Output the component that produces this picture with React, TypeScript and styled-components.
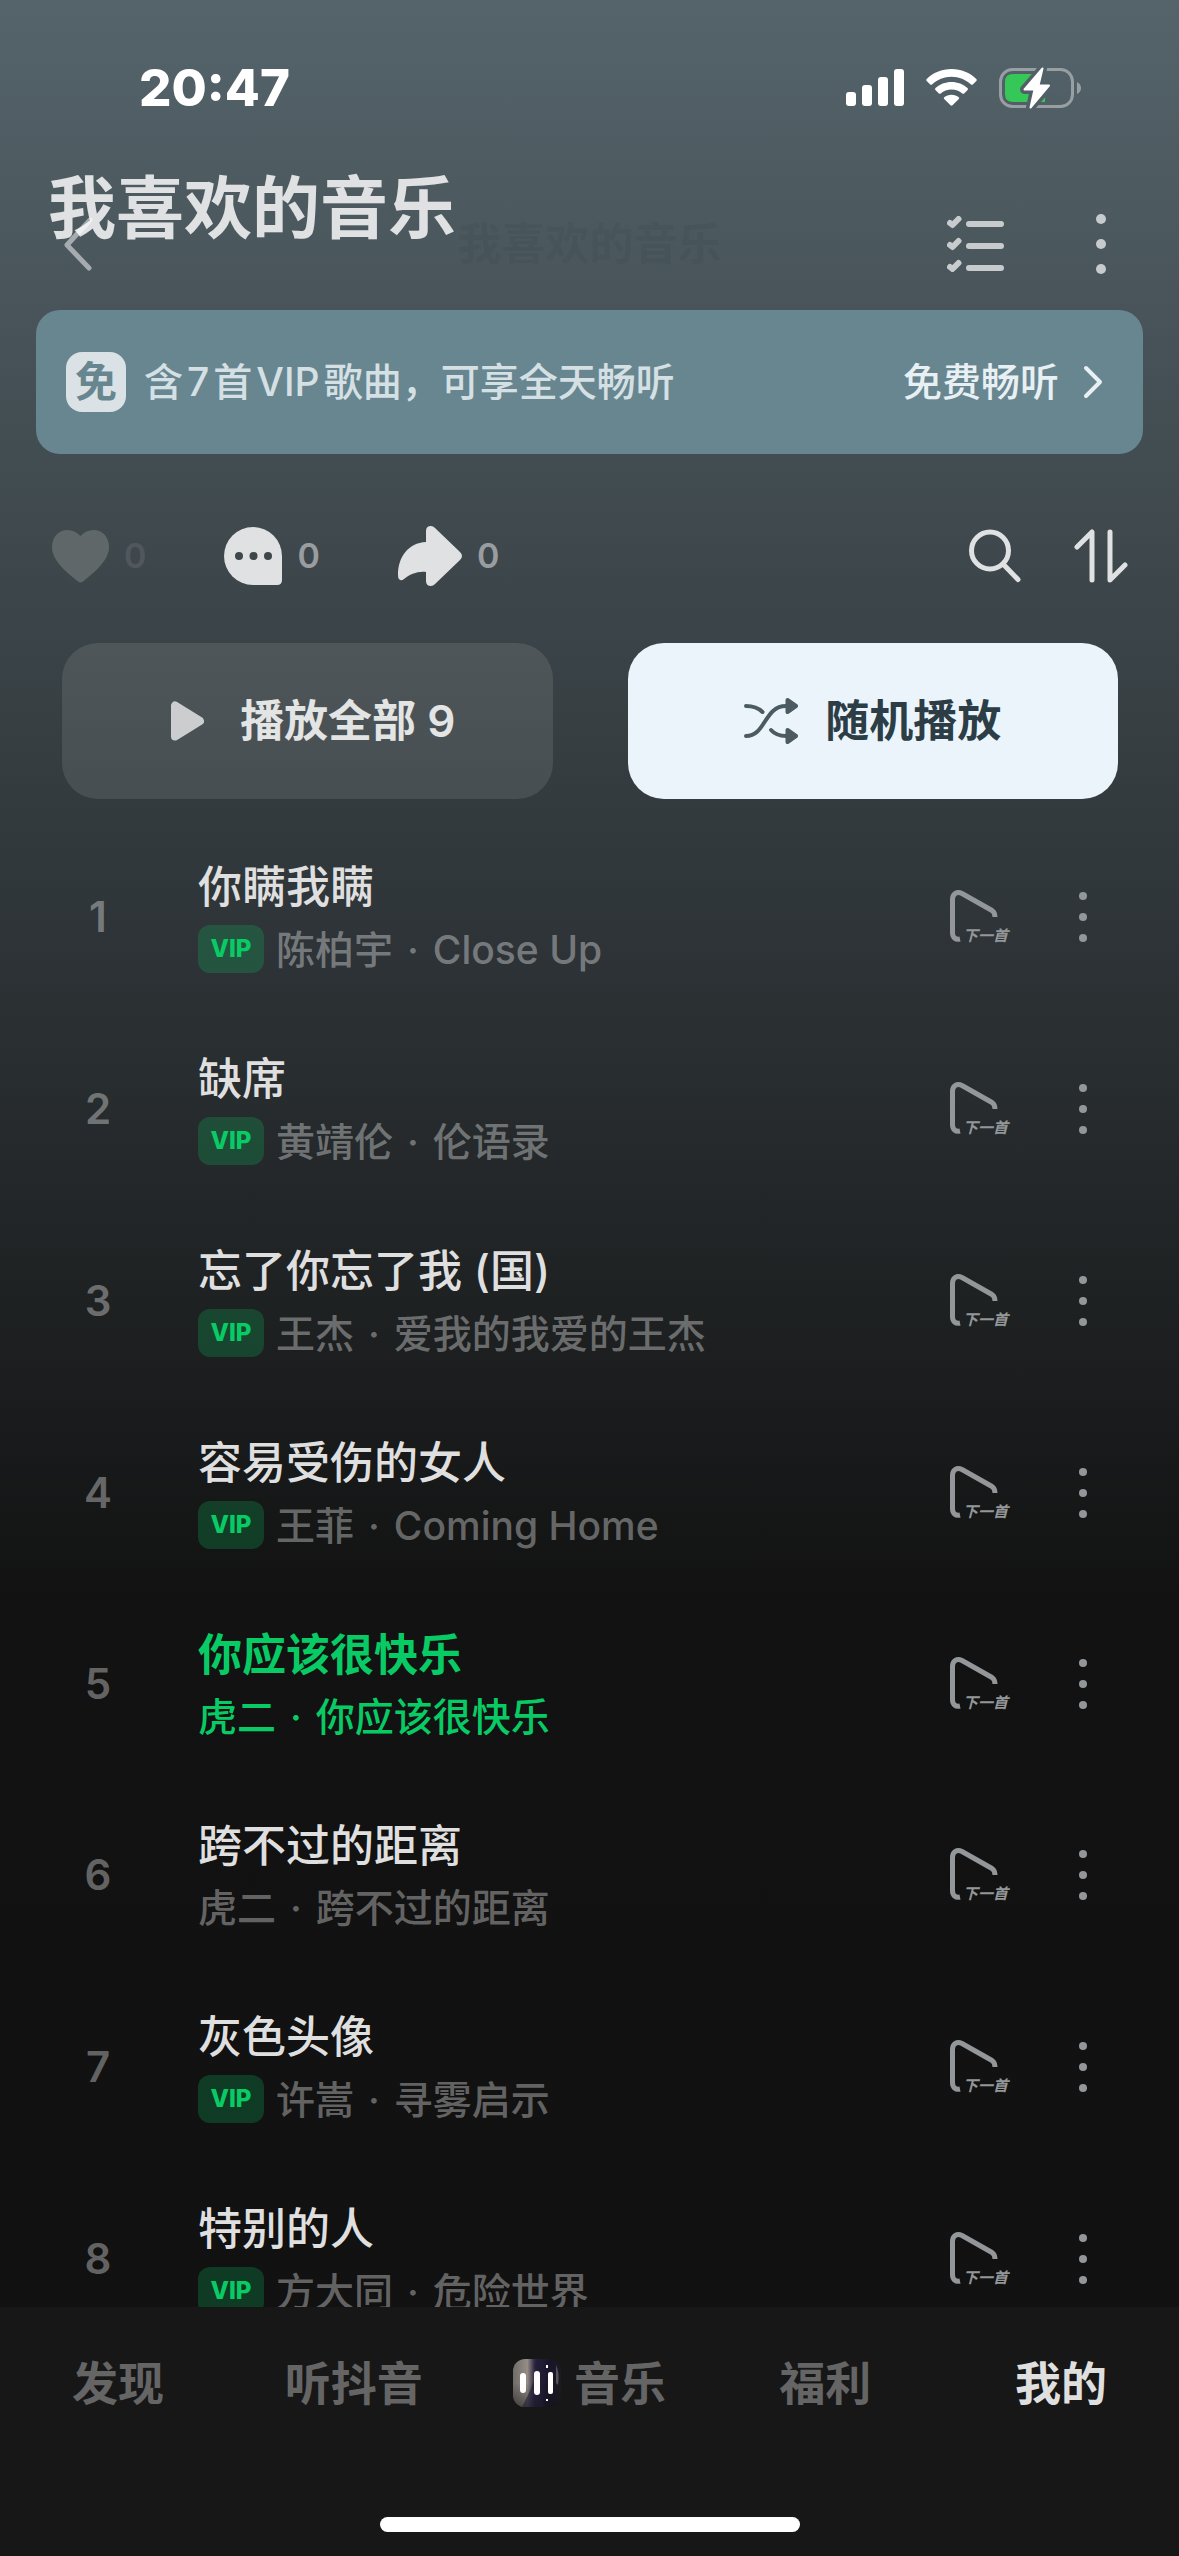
import React from "react";
import styled, { createGlobalStyle } from "styled-components";

const GlobalStyle = createGlobalStyle`
  *, *::before, *::after { box-sizing: border-box; }
  html, body { margin: 0; padding: 0; background: #111111; }
  body {
    font-family: Inter, "Noto Sans CJK SC", sans-serif;
    color: #e0e1e2;
  }
  button {
    margin: 0;
    padding: 0;
    border: 0;
    background: none;
    font: inherit;
    color: inherit;
    cursor: pointer;
  }
  svg { display: block; }
`;

const Screen = styled.div`
  display: flex;
  flex-direction: column;
  height: 100vh;
  overflow: hidden;
  background: linear-gradient(180deg, #55646b 0, #121212 1600px, #111111 100%);
`;

const StatusBar = styled.div`
  display: flex;
  flex: none;
  align-items: center;
  justify-content: space-between;
  height: 156px;
  padding: 20px 98px 0 139px;
  color: #ffffff;
`;

const Clock = styled.time`
  font-size: 51px;
  line-height: 60px;
  font-weight: 800;
`;

const StatusIcons = styled.div`
  display: flex;
  align-items: center;
  gap: 22px;
`;

const Header = styled.header`
  position: relative;
  flex: none;
  padding: 22px 56px 0;
`;

const Toolbar = styled.div`
  display: grid;
  grid-template-columns: 1fr auto 1fr;
  align-items: center;
  height: 132px;
`;

const BackButton = styled.button`
  justify-self: start;
  padding: 0 6px;
`;

const ToolbarTitle = styled.span`
  font-size: 44px;
  line-height: 56px;
  font-weight: 700;
  color: rgba(40, 52, 56, 0.1);
`;

const ToolbarActions = styled.div`
  display: flex;
  justify-self: end;
  align-items: center;
  gap: 76px;
  padding-right: 2px;
  color: #c8cbcd;
`;

const IconButton = styled.button`
  display: flex;
  align-items: center;
  justify-content: center;
  min-width: 40px;
`;

const PlaylistTitle = styled.h1`
  position: absolute;
  top: 12px;
  left: 48px;
  margin: 0;
  font-size: 68px;
  line-height: 80px;
  font-weight: 700;
  color: #dfe1e3;
`;

const BackGlyph = styled.svg`
  position: relative;
  z-index: 1;
`;

const Banner = styled.section`
  display: flex;
  flex: none;
  align-items: center;
  height: 144px;
  margin: 0 36px;
  padding: 0 36px 0 30px;
  border-radius: 24px;
  background: #688690;
`;

const FreeBadge = styled.span`
  display: flex;
  align-items: center;
  justify-content: center;
  width: 60px;
  height: 60px;
  margin-right: 18px;
  border-radius: 16px;
  background: #dae2e5;
  color: #688690;
  font-size: 42px;
  line-height: 60px;
  font-weight: 700;
`;

const BannerText = styled.span`
  flex: 1;
  font-size: 39px;
  line-height: 48px;
  font-weight: 500;
  color: #d5e0e4;
`;

const Latin = styled.span`
  margin: 0 4px;
`;

const BannerLink = styled.a`
  display: flex;
  align-items: center;
  gap: 24px;
  padding-right: 4px;
  font-size: 39px;
  line-height: 48px;
  font-weight: 500;
  color: #e9f0f4;
  text-decoration: none;
`;

const ActionRow = styled.div`
  display: flex;
  flex: none;
  align-items: center;
  justify-content: space-between;
  padding: 72px 51px 57px 52px;
`;

const ActionGroup = styled.div<{ $gap: number }>`
  display: flex;
  align-items: center;
  gap: ${(p) => p.$gap}px;
  height: 60px;
`;

const CountButton = styled.button<{ $dim?: boolean }>`
  display: flex;
  align-items: center;
  gap: 15px;
  color: ${(p) => (p.$dim ? "#5f6769" : "#e0e1e3")};

  span {
    font-size: 34px;
    line-height: 40px;
    font-weight: 600;
    color: ${(p) => (p.$dim ? "#50575d" : "#999da0")};
  }
`;

const PlayRow = styled.div`
  display: grid;
  flex: none;
  grid-template-columns: 1fr 1fr;
  gap: 75px;
  padding: 0 61px 22px 62px;
`;

const PlayButton = styled.button<{ $light?: boolean }>`
  display: flex;
  align-items: center;
  justify-content: center;
  gap: ${(p) => (p.$light ? 27 : 36)}px;
  height: 156px;
  padding-left: ${(p) => (p.$light ? 0 : 12)}px;
  border-radius: 36px;
  font-size: 44px;
  line-height: 56px;
  font-weight: 600;
  background: ${(p) => (p.$light ? "#ebf4fb" : "rgba(255, 255, 255, 0.1)")};
  color: ${(p) => (p.$light ? "#2c3d46" : "#e3e4e4")};
`;

const SongList = styled.ol`
  flex: 1;
  min-height: 0;
  margin: 0;
  padding: 0;
  overflow: hidden;
  list-style: none;
`;

const SongRow = styled.li`
  display: flex;
  align-items: center;
  padding: 39px 76px 40px 62px;
`;

const SongNumber = styled.span`
  width: 72px;
  margin-right: 64px;
  font-size: 42px;
  line-height: 52px;
  font-weight: 600;
  text-align: center;
  color: rgba(255, 255, 255, 0.36);
`;

const SongInfo = styled.div`
  flex: 1;
  min-width: 0;
`;

const SongTitle = styled.div<{ $active?: boolean }>`
  margin-bottom: 11px;
  font-size: 44px;
  line-height: 54px;
  font-weight: ${(p) => (p.$active ? 700 : 500)};
  color: ${(p) => (p.$active ? "#09cb65" : "#dfdfdf")};
`;

const SongMeta = styled.div<{ $active?: boolean }>`
  display: flex;
  align-items: center;
  gap: 12px;
  font-size: 39px;
  line-height: 47px;
  font-weight: 500;
  color: ${(p) => (p.$active ? "#09cb65" : "rgba(255, 255, 255, 0.36)")};
`;

const Separator = styled.span`
  margin: 0 14px;
`;

const VipTag = styled.span`
  display: flex;
  align-items: center;
  justify-content: center;
  width: 66px;
  height: 48px;
  border-radius: 12px;
  background: rgba(9, 203, 101, 0.22);
  color: #09cb65;
  font-size: 24px;
  line-height: 28px;
  font-weight: 800;
`;

const RowActions = styled.div`
  display: flex;
  align-items: center;
  gap: 50px;
  color: #949799;
`;

const TabBar = styled.nav`
  display: flex;
  flex: none;
  flex-direction: column;
  align-items: center;
  background: #171717;
`;

const Tabs = styled.div`
  display: grid;
  grid-template-columns: repeat(5, 1fr);
  width: 100%;
  padding: 40px 0 98px;
`;

const Tab = styled.button<{ $active?: boolean }>`
  display: flex;
  align-items: center;
  justify-content: center;
  gap: 13px;
  height: 72px;
  font-size: 46px;
  line-height: 60px;
  font-weight: 700;
  color: ${(p) => (p.$active ? "#dfdfdf" : "#656565")};
`;

const HomeIndicator = styled.div`
  width: 420px;
  height: 15px;
  margin-bottom: 24px;
  border-radius: 8px;
  background: #ffffff;
`;

const SignalIcon = () => (
  <svg width="58" height="38" viewBox="0 0 58 38" fill="#fff">
    <rect x="0" y="23" width="10" height="14" rx="3" />
    <rect x="16" y="16" width="10" height="21" rx="3" />
    <rect x="32" y="8" width="10" height="29" rx="3" />
    <rect x="48" y="0" width="10" height="37" rx="3" />
  </svg>
);

const WifiIcon = () => (
  <svg width="51" height="38" viewBox="0 0 51 38" fill="#fff">
    <path d="M25.500 0C35.300 0 44 3.800 50.300 10Q51.200 11 50.300 12L46.800 15.400Q46 16.200 45 15.400C39.800 10.700 33 7.800 25.500 7.800S11.200 10.700 6 15.400Q5 16.200 4.200 15.400L.7 12Q-.2 11 .7 10C7 3.800 15.700 0 25.500 0Z" />
    <path d="M25.500 13C31.700 13 37.300 15.300 41.500 19Q42.500 20 41.600 21L38.100 24.500Q37.200 25.200 36.300 24.500C33.400 22 29.600 20.600 25.500 20.600S17.600 22 14.700 24.500Q13.800 25.200 12.900 24.500L9.400 21Q8.500 20 9.500 19C13.700 15.300 19.300 13 25.500 13Z" />
    <path d="M25.500 25.700C28.300 25.700 30.900 26.600 32.800 28.200Q33.700 29 32.800 30L26.500 36.300Q25.500 37.200 24.500 36.300L18.200 30Q17.300 29 18.200 28.200C20.100 26.600 22.700 25.700 25.500 25.700Z" />
  </svg>
);

const BatteryIcon = () => (
  <svg width="82" height="42" viewBox="0 0 82 42">
    <defs>
      <mask id="bolt-gap" maskUnits="userSpaceOnUse" x="0" y="0" width="82" height="42">
        <rect width="82" height="42" fill="#fff" />
        <path
          d="M43.500 1.500L25.500 22.500H35.500L31.500 40.500L50 18.500H39.500Z"
          fill="#000"
          stroke="#000"
          strokeWidth="9"
          strokeLinejoin="round"
        />
      </mask>
    </defs>
    <g mask="url(#bolt-gap)">
      <rect x="1.500" y="2.500" width="72" height="37" rx="12" fill="none" stroke="#989fa3" strokeWidth="3" />
      <path d="M14 7H44Q46 14 46 20V35H14Q6 35 6 27V15Q6 7 14 7Z" fill="#36c759" />
    </g>
    <path d="M78 15Q82 17 82 21T78 27Z" fill="#989fa3" />
    <path
      d="M43.500 1.500L25.500 22.500H35.500L31.500 40.500L50 18.500H39.500Z"
      fill="#fff"
      stroke="#fff"
      strokeWidth="2"
      strokeLinejoin="round"
    />
  </svg>
);

const ChecklistIcon = () => (
  <svg width="58" height="56" viewBox="0 0 58 56" fill="none" stroke="currentColor" strokeLinecap="round" strokeLinejoin="round">
    {[0, 22, 44].map((y) => (
      <g key={y}>
        <path d={`M3 ${y + 7}L5.500 ${y + 9}L11.500 ${y + 3}`} strokeWidth="6" />
        <path d={`M22 ${y + 8}H54`} strokeWidth="6" />
      </g>
    ))}
  </svg>
);

const DotsIcon = ({ radius, step }: { radius: number; step: number }) => (
  <svg width={radius * 2} height={(radius + step) * 2} fill="currentColor">
    {[0, 1, 2].map((i) => (
      <circle key={i} cx={radius} cy={radius + step * i} r={radius} />
    ))}
  </svg>
);

const HeartIcon = () => (
  <svg width="57" height="53" viewBox="0 0 57 53" fill="currentColor">
    <path d="M28.500 6C25 2.200 20.500 0 15.500 0C6.500 0 0 7 0 17C0 30 13 41 26 51.500Q28.500 53.300 31 51.500C44 41 57 30 57 17C57 7 50.500 0 41.500 0C36.500 0 32 2.200 28.500 6Z" />
  </svg>
);

const CommentIcon = () => (
  <svg width="58" height="58" viewBox="0 0 58 58" fill="currentColor">
    <path d="M29 0A29 29 0 0 0 29 58H53Q58 58 58 53V29A29 29 0 0 0 29 0Z" />
    <g fill="#3f474b">
      <circle cx="15" cy="29" r="4" />
      <circle cx="29.500" cy="29" r="4" />
      <circle cx="44" cy="29" r="4" />
    </g>
  </svg>
);

const ShareIcon = () => (
  <svg width="64" height="60" viewBox="0 0 64 60" fill="currentColor">
    <path d="M28 5Q28 0 33 0Q35 0 37 2L62 26Q66 30 62 34L37 58Q35 60 33 60Q28 60 28 55V46C20 45 12 48 6 53Q3 55.500 1 53Q0 52 0 49C0 31 10 17 28 16Z" />
  </svg>
);

const SearchIcon = () => (
  <svg width="52" height="54" viewBox="0 0 52 54" fill="none" stroke="currentColor" strokeWidth="5" strokeLinecap="round">
    <circle cx="21" cy="21.500" r="18.500" />
    <path d="M35 36L49 50.500" />
  </svg>
);

const SortIcon = () => (
  <svg width="54" height="54" viewBox="0 0 54 54" fill="none" stroke="currentColor" strokeWidth="5" strokeLinecap="round" strokeLinejoin="round">
    <path d="M3 18L18 3V51" />
    <path d="M36 3V51L51 36" />
  </svg>
);

const PlayIcon = () => (
  <svg width="33" height="40" viewBox="0 0 33 40" fill="#cbcdce" stroke="#cbcdce" strokeWidth="8" strokeLinejoin="round">
    <path d="M4 4.500V35.500L29 20Z" />
  </svg>
);

const ShuffleIcon = () => (
  <svg width="54" height="46" viewBox="0 0 54 46" fill="none" stroke="#4b5b61" strokeWidth="4" strokeLinecap="round">
    <path d="M2 8C9 8 14 9.500 18.500 14" />
    <path d="M2 38C22 38 20 8 42 8" />
    <path d="M27 32C31 36.500 36 38 42 38" />
    <path d="M43.500 2L52 8L43.500 14Z" fill="#4b5b61" strokeWidth="4" strokeLinejoin="round" />
    <path d="M43.500 32L52 38L43.500 44Z" fill="#4b5b61" strokeWidth="4" strokeLinejoin="round" />
  </svg>
);

const PlayNextIcon = () => (
  <svg width="64" height="58" viewBox="0 0 64 58" fill="none" stroke="currentColor" strokeWidth="5">
    <path d="M11 51C6.500 52 3.500 49.500 3.500 44.500V11.500C3.500 5.500 8 3 13 5.500L43 22.500Q46 24.500 46 29" />
    <text
      x="14"
      y="53"
      fill="currentColor"
      stroke="none"
      fontSize="15"
      fontWeight="700"
      fontStyle="italic"
      fontFamily='"Noto Sans CJK SC", sans-serif'
    >
      下一首
    </text>
  </svg>
);

const CoverArt = () => (
  <svg width="48" height="48" viewBox="0 0 48 48">
    <defs>
      <linearGradient id="cover" x1="0" x2="1" y1="0" y2="0">
        <stop offset="0" stopColor="#6f6c69" />
        <stop offset="0.300" stopColor="#958d86" />
        <stop offset="0.450" stopColor="#2b2540" />
        <stop offset="0.750" stopColor="#17152a" />
        <stop offset="1" stopColor="#1c1b22" />
      </linearGradient>
      <linearGradient id="cover-shade" x1="0" x2="0" y1="0" y2="1">
        <stop offset="0.500" stopColor="#111" stopOpacity="0" />
        <stop offset="1" stopColor="#111" stopOpacity="0.500" />
      </linearGradient>
    </defs>
    <rect width="48" height="48" rx="12" fill="url(#cover)" />
    <rect width="48" height="48" rx="12" fill="url(#cover-shade)" />
    <path d="M20 0H24L22 8L26 14L20 24L16 34L9 48H30V0Z" fill="#211c33" opacity="0.600" />
    <path d="M43 6Q47 14 45 26L43 24Z" fill="#55525a" />
    <g fill="#fff">
      <rect x="7" y="14" width="6" height="20" rx="3" />
      <rect x="21" y="12" width="6" height="24" rx="3" />
      <rect x="35" y="13" width="5" height="22" rx="2" />
      <rect x="33" y="6" width="2" height="3" />
      <rect x="33" y="40" width="2" height="2" />
    </g>
  </svg>
);

type Song = { title: string; artist: string; album: string; vip?: boolean; active?: boolean };

const songs: Song[] = [
  { title: "你瞒我瞒", artist: "陈柏宇", album: "Close Up", vip: true },
  { title: "缺席", artist: "黄靖伦", album: "伦语录", vip: true },
  { title: "忘了你忘了我 (国)", artist: "王杰", album: "爱我的我爱的王杰", vip: true },
  { title: "容易受伤的女人", artist: "王菲", album: "Coming Home", vip: true },
  { title: "你应该很快乐", artist: "虎二", album: "你应该很快乐", active: true },
  { title: "跨不过的距离", artist: "虎二", album: "跨不过的距离" },
  { title: "灰色头像", artist: "许嵩", album: "寻雾启示", vip: true },
  { title: "特别的人", artist: "方大同", album: "危险世界", vip: true },
];

const tabs = [
  { label: "发现" },
  { label: "听抖音" },
  { label: "音乐", cover: true },
  { label: "福利" },
  { label: "我的", active: true },
];

export default function App() {
  return (
    <Screen lang="zh-CN">
      <GlobalStyle />
      <StatusBar>
        <Clock>20:47</Clock>
        <StatusIcons>
          <SignalIcon />
          <WifiIcon />
          <BatteryIcon />
        </StatusIcons>
      </StatusBar>

      <Header>
        <PlaylistTitle>我喜欢的音乐</PlaylistTitle>
        <Toolbar>
          <BackButton aria-label="返回">
            <BackGlyph width="32" height="54" viewBox="0 0 32 54" fill="none" stroke="#fff" strokeOpacity="0.5" strokeWidth="5" strokeLinecap="round" strokeLinejoin="round">
              <path d="M28 3L5 28L27 51" />
            </BackGlyph>
          </BackButton>
          <ToolbarTitle aria-hidden="true">我喜欢的音乐</ToolbarTitle>
          <ToolbarActions>
            <IconButton aria-label="多选">
              <ChecklistIcon />
            </IconButton>
            <IconButton aria-label="更多">
              <DotsIcon radius={5} step={25} />
            </IconButton>
          </ToolbarActions>
        </Toolbar>
      </Header>

      <Banner>
        <FreeBadge>免</FreeBadge>
        <BannerText>
          含<Latin>7</Latin>首<Latin>VIP</Latin>歌曲，可享全天畅听
        </BannerText>
        <BannerLink href="#free">
          免费畅听
          <svg width="20" height="34" viewBox="0 0 20 34" fill="none" stroke="currentColor" strokeWidth="4" strokeLinecap="round" strokeLinejoin="round">
            <path d="M3 3L17 17L3 31" />
          </svg>
        </BannerLink>
      </Banner>

      <ActionRow>
        <ActionGroup $gap={78}>
          <CountButton $dim aria-label="收藏">
            <HeartIcon />
            <span>0</span>
          </CountButton>
          <CountButton aria-label="评论">
            <CommentIcon />
            <span>0</span>
          </CountButton>
          <CountButton aria-label="分享">
            <ShareIcon />
            <span>0</span>
          </CountButton>
        </ActionGroup>
        <ActionGroup $gap={53}>
          <IconButton aria-label="搜索">
            <SearchIcon />
          </IconButton>
          <IconButton aria-label="排序">
            <SortIcon />
          </IconButton>
        </ActionGroup>
      </ActionRow>

      <PlayRow>
        <PlayButton>
          <PlayIcon />
          <span>播放全部 9</span>
        </PlayButton>
        <PlayButton $light>
          <ShuffleIcon />
          <span>随机播放</span>
        </PlayButton>
      </PlayRow>

      <SongList>
        {songs.map((song, index) => (
          <SongRow key={song.title}>
            <SongNumber>{index + 1}</SongNumber>
            <SongInfo>
              <SongTitle $active={song.active}>{song.title}</SongTitle>
              <SongMeta $active={song.active}>
                {song.vip && <VipTag>VIP</VipTag>}
                <span>
                  {song.artist}
                  <Separator>·</Separator>
                  {song.album}
                </span>
              </SongMeta>
            </SongInfo>
            <RowActions>
              <IconButton aria-label="下一首播放">
                <PlayNextIcon />
              </IconButton>
              <IconButton aria-label="更多">
                <DotsIcon radius={4} step={21} />
              </IconButton>
            </RowActions>
          </SongRow>
        ))}
      </SongList>

      <TabBar>
        <Tabs>
          {tabs.map((tab) => (
            <Tab key={tab.label} $active={tab.active}>
              {tab.cover && <CoverArt />}
              <span>{tab.label}</span>
            </Tab>
          ))}
        </Tabs>
        <HomeIndicator />
      </TabBar>
    </Screen>
  );
}
